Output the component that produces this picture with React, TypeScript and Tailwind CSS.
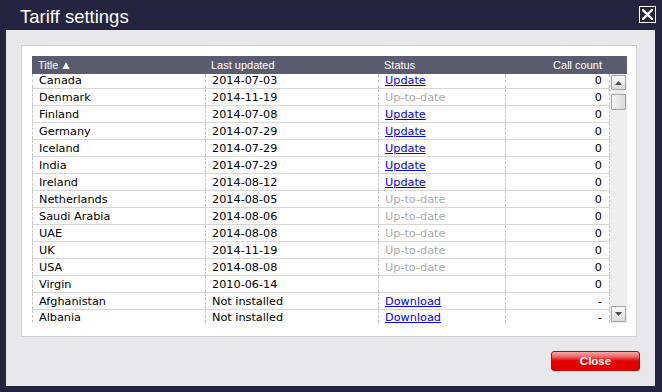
import React from "react";

type Row = { t: string; d: string; s: "u" | "ok" | "" | "dl"; c: string };

const rows: Row[] = [
  { t: "Canada", d: "2014-07-03", s: "u", c: "0" },
  { t: "Denmark", d: "2014-11-19", s: "ok", c: "0" },
  { t: "Finland", d: "2014-07-08", s: "u", c: "0" },
  { t: "Germany", d: "2014-07-29", s: "u", c: "0" },
  { t: "Iceland", d: "2014-07-29", s: "u", c: "0" },
  { t: "India", d: "2014-07-29", s: "u", c: "0" },
  { t: "Ireland", d: "2014-08-12", s: "u", c: "0" },
  { t: "Netherlands", d: "2014-08-05", s: "ok", c: "0" },
  { t: "Saudi Arabia", d: "2014-08-06", s: "ok", c: "0" },
  { t: "UAE", d: "2014-08-08", s: "ok", c: "0" },
  { t: "UK", d: "2014-11-19", s: "ok", c: "0" },
  { t: "USA", d: "2014-08-08", s: "ok", c: "0" },
  { t: "Virgin", d: "2010-06-14", s: "", c: "0" },
  { t: "Afghanistan", d: "Not installed", s: "dl", c: "-" },
  { t: "Albania", d: "Not installed", s: "dl", c: "-" },
];

function Status({ s }: { s: Row["s"] }) {
  if (s === "u") return <span className="text-[#0000ee] underline">Update</span>;
  if (s === "dl") return <span className="text-[#0000ee] underline">Download</span>;
  if (s === "ok") return <span className="text-[#ababab]">Up-to-date</span>;
  return null;
}

const cellBase = "border-l border-dashed border-[#c4c4c4] px-[6px] whitespace-nowrap";

export default function App() {
  return (
    <div className="w-[662px] h-[392px] bg-[#252440] flex flex-col overflow-hidden">
      {/* Title bar */}
      <div className="h-[30px] flex items-start justify-between shrink-0">
        <div
          className="pl-[20px] pt-[6px] leading-[21px] text-[18.5px] text-white"
          style={{ fontFamily: '"Liberation Sans", Arial, sans-serif' }}
        >
          Tariff settings
        </div>
        <div className="mt-[6px] mr-[6px] w-[17px] h-[17px] border border-white flex items-center justify-center">
          <svg width="11" height="11" viewBox="0 0 11 11">
            <path d="M1 1 L10 10 M10 1 L1 10" stroke="white" strokeWidth="2.4" strokeLinecap="square" />
          </svg>
        </div>
      </div>

      {/* Content */}
      <div className="ml-[6px] w-[649px] h-[356px] bg-[#e8e8ea] flex flex-col pl-[15px] pt-[15px]">
        <div className="w-[616px] h-[292px] bg-white border border-[#d0d0d0] pl-[10px] pt-[10px]">
          {/* Header */}
          <div
            className="w-[595px] h-[18px] bg-[#5b5b70] flex text-white text-[11px] leading-[18px]"
            style={{ fontFamily: '"Liberation Sans", Arial, sans-serif' }}
          >
            <div className="w-[173px] pl-[6px] flex items-center gap-[4px]">
              <span>Title</span>
              <span className="text-[9px]" style={{ fontFamily: '"DejaVu Sans", sans-serif' }}>▲</span>
            </div>
            <div className="w-[173px] pl-[6px]">Last updated</div>
            <div className="w-[127px] pl-[6px]">Status</div>
            <div className="w-[105px] pr-[8px] text-right">Call count</div>
          </div>

          {/* Body */}
          <div className="flex w-[595px] h-[249px]">
            <div
              className="w-[578px] h-[249px] text-[11.25px] text-black"
              style={{ fontFamily: '"DejaVu Sans", Verdana, sans-serif' }}
            >
              {rows.map((r, i) => {
                const first = i === 0;
                const last = i === rows.length - 1;
                const h = first
                  ? "h-[14px] leading-[13px]"
                  : last
                  ? "h-[13px] pt-[2px] leading-[11px]"
                  : "h-[16px] pt-[1px] leading-[15px]";
                const cell = `${cellBase} ${h}`;
                return (
                  <div key={r.t} className={`flex ${last ? "" : "border-b border-[#d6d6d6]"}`}>
                    <div className={`${cell} w-[173px]`}>{r.t}</div>
                    <div className={`${cell} w-[173px]`}>{r.d}</div>
                    <div className={`${cell} w-[127px]`}>
                      <Status s={r.s} />
                    </div>
                    <div className={`${cell} w-[105px] border-r text-right pr-[7px]`}>{r.c}</div>
                  </div>
                );
              })}
            </div>
            {/* Scrollbar */}
            <div className="w-[17px] h-[249px] bg-[#eeeeee] flex flex-col items-center pt-[1px] pb-[1px]">
              <div className="w-[15px] h-[15px] border border-[#a4a4a4] rounded-[1px] bg-[linear-gradient(to_bottom,#fafafa,#dcdcdc)] flex items-center justify-center">
                <svg width="7" height="4" viewBox="0 0 7 4">
                  <path d="M0 4 L3.5 0 L7 4 Z" fill="#4a4a4a" />
                </svg>
              </div>
              <div className="mt-[4px] w-[15px] h-[16px] border border-[#a4a4a4] rounded-[1px] bg-[linear-gradient(to_right,#f4f4f4,#dadada)]" />
              <div className="flex-1" />
              <div className="w-[15px] h-[16px] border border-[#a4a4a4] rounded-[1px] bg-[linear-gradient(to_bottom,#fafafa,#dcdcdc)] flex items-center justify-center">
                <svg width="7" height="4" viewBox="0 0 7 4">
                  <path d="M0 0 L7 0 L3.5 4 Z" fill="#4a4a4a" />
                </svg>
              </div>
            </div>
          </div>
        </div>

        {/* Footer */}
        <div className="flex justify-end pr-[15px] pt-[14px]">
          <button
            className="w-[89px] h-[20px] rounded-[3px] border border-[#c80000] bg-[linear-gradient(to_bottom,#f6a8a8_0%,#ee6a6a_25%,#e20000_50%,#e00000_100%)] text-white font-bold text-[11.5px] leading-[18px]"
            style={{ fontFamily: '"Liberation Sans", Arial, sans-serif' }}
          >
            Close
          </button>
        </div>
      </div>
    </div>
  );
}
